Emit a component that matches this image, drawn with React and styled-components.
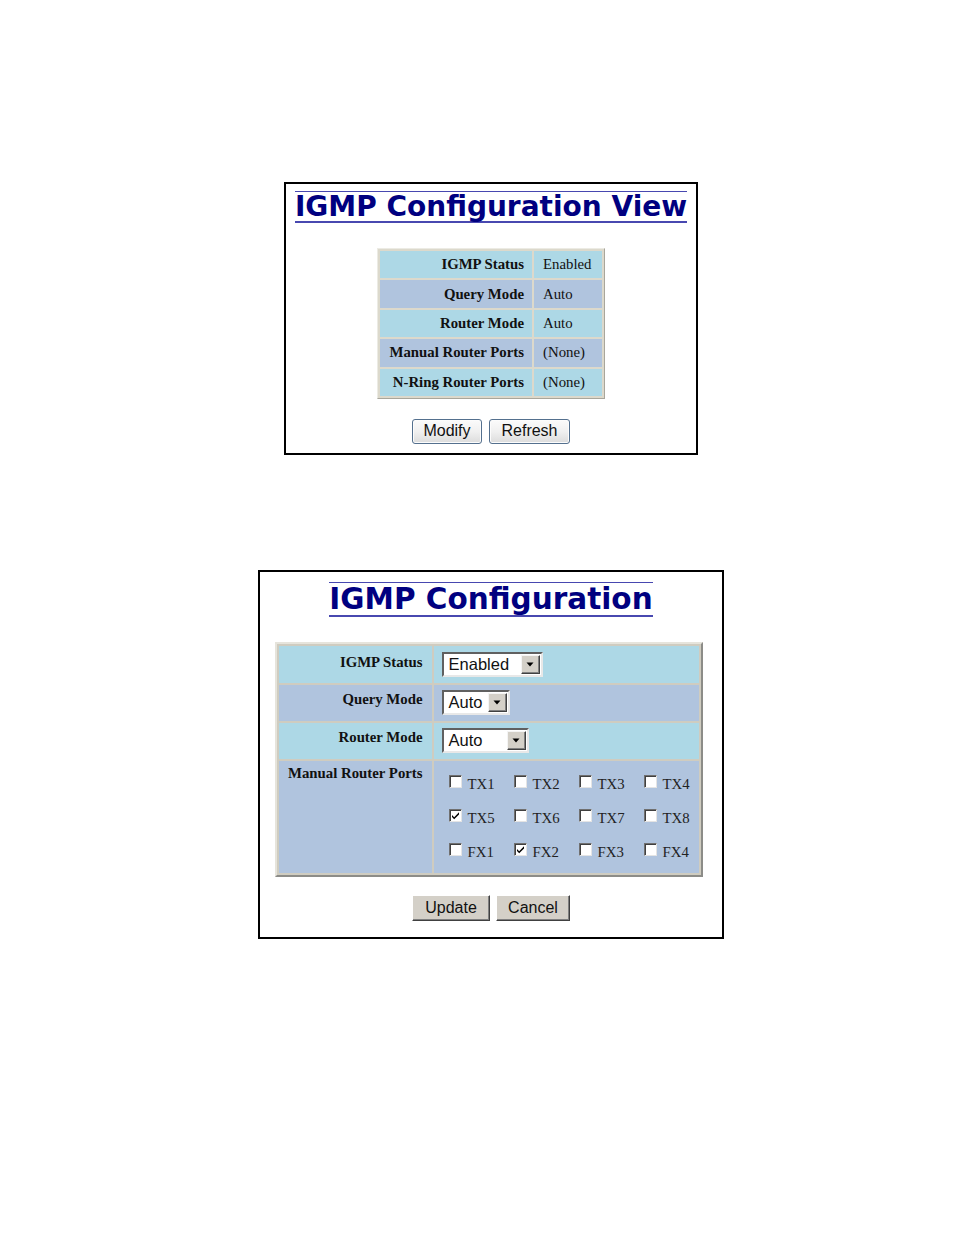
import React from "react";
import styled, { createGlobalStyle } from "styled-components";

const GlobalStyle = createGlobalStyle`
	html, body {
		margin: 0;
		padding: 0;
		background: #ffffff;
	}
	body {
		font-family: "Liberation Serif", "Times New Roman", serif;
		width: 954px;
		height: 1235px;
	}
`;

const Page = styled.div`
	display: flex;
	flex-direction: column;
	align-items: center;
	padding: 182px 0 0 28px;
	gap: 115px;
`;

const Panel = styled.div`
	width: ${(p) => p.width}px;
	box-sizing: border-box;
	border: 2px solid #000;
	display: flex;
	flex-direction: column;
	align-items: center;
	padding: ${(p) => p.pad};
`;

const Title = styled.h1`
	margin: 0;
	font-family: "DejaVu Sans", Verdana, sans-serif;
	font-weight: bold;
	font-size: ${(p) => p.size}px;
	line-height: ${(p) => p.lh}px;
	color: #000080;
	border-top: 1px solid #4848b0;
	border-bottom: 2px solid #4848b0;
	white-space: nowrap;
`;

const ViewTable = styled.table`
	border-collapse: separate;
	border-spacing: 2px;
	background: #dcd9cc;
	border-top: 1px solid #ecebe4;
	border-left: 1px solid #ecebe4;
	border-right: 1px solid #a8a69c;
	border-bottom: 1px solid #a8a69c;
	margin-top: ${(p) => p.top}px;
	font-size: 14.8px;
`;

const Row = styled.tr`
	background: ${(p) => (p.alt ? "#b0c4de" : "#add8e6")};
`;

const Label = styled.td`
	font-weight: bold;
	text-align: right;
	color: #111;
	padding: ${(p) => p.pad || "0 8px 0 9px"};
	height: ${(p) => p.h || 27.4}px;
	width: ${(p) => (p.w ? `${p.w}px` : "auto")};
	vertical-align: ${(p) => p.valign || "middle"};
	white-space: nowrap;
`;

const Value = styled.td`
	color: #111;
	padding: ${(p) => p.pad || "0 10px 0 9px"};
	height: ${(p) => p.h || 27.4}px;
	vertical-align: ${(p) => p.valign || "middle"};
	white-space: nowrap;
`;

const ButtonRow = styled.div`
	display: flex;
	gap: ${(p) => p.gap}px;
	margin-top: ${(p) => p.top}px;
`;

const VistaButton = styled.button`
	font-family: "Liberation Sans", Arial, sans-serif;
	font-size: 16px;
	color: #111;
	height: 25px;
	width: ${(p) => p.w}px;
	padding: 0;
	border: 1px solid #54708e;
	border-radius: 3px;
	background: linear-gradient(#fbfbfb, #f0f0f0 50%, #dcdcdc);
	box-shadow: inset 0 0 0 1px #fcfcfc;
`;

const ClassicButton = styled.button`
	font-family: "Liberation Sans", Arial, sans-serif;
	font-size: 16px;
	color: #111;
	height: 26px;
	width: ${(p) => p.w}px;
	padding: 0;
	background: #d4d0c8;
	border: none;
	border-top: 1px solid #ffffff;
	border-left: 1px solid #ffffff;
	border-right: 1px solid #404040;
	border-bottom: 1px solid #404040;
	box-shadow: inset -1px -1px 0 #808080;
`;

const ConfigTable = styled.table`
	border-collapse: separate;
	border-spacing: 2px;
	background: #cfccc0;
	border-top: 2px solid #e6e4dc;
	border-left: 2px solid #e6e4dc;
	border-right: 2px solid #8c8c88;
	border-bottom: 2px solid #8c8c88;
	margin: 25px 4px 0 0;
	width: 428px;
	font-size: 14.8px;
`;

const Select = styled.div`
	display: inline-flex;
	align-items: center;
	justify-content: space-between;
	box-sizing: border-box;
	width: ${(p) => p.w}px;
	height: 25px;
	background: #fff;
	border-top: 2px solid #606060;
	border-left: 2px solid #606060;
	border-right: 2px solid #e8e8e8;
	border-bottom: 2px solid #e8e8e8;
	font-family: "Liberation Sans", Arial, sans-serif;
	font-size: 16.5px;
	color: #111;
	padding: 0 1px 0 5px;
`;

const Arrow = styled.span`
	width: 19px;
	height: 19px;
	box-sizing: border-box;
	background: #d4d0c8;
	border-top: 1px solid #f4f4f4;
	border-left: 1px solid #f4f4f4;
	border-right: 1px solid #404040;
	border-bottom: 1px solid #404040;
	box-shadow: inset -1px -1px 0 #808080;
	display: flex;
	align-items: center;
	justify-content: center;
`;

const PortGrid = styled.div`
	display: grid;
	grid-template-columns: repeat(3, 65px) auto;
	row-gap: 13px;
	padding: 13px 0 0 15px;
`;

const Port = styled.label`
	display: flex;
	align-items: center;
	gap: 6px;
	height: 21px;
	color: #222;
`;

const Box = styled.span`
	width: 13px;
	height: 13px;
	box-sizing: border-box;
	background: #fff;
	border-top: 1px solid #707070;
	border-left: 1px solid #707070;
	border-right: 1px solid #e4e4e4;
	border-bottom: 1px solid #e4e4e4;
	box-shadow: inset 1px 1px 0 #404040;
	display: flex;
	align-items: center;
	justify-content: center;
	margin-top: -5px;
`;

const ArrowIcon = () => (
	<Arrow>
		<svg width="8" height="5" viewBox="0 0 8 5">
			<path d="M0.5 0.5h7L4 4.5z" fill="#000" />
		</svg>
	</Arrow>
);

const CheckBox = ({ checked }) => (
	<Box>
		{checked && (
			<svg width="9" height="9" viewBox="0 0 9 9">
				<path d="M1 4l2.2 2.2L8 1.2v2.3L3.2 8.3 1 6.1z" fill="#000" />
			</svg>
		)}
	</Box>
);

const viewRows = [
	["IGMP Status", "Enabled"],
	["Query Mode", "Auto"],
	["Router Mode", "Auto"],
	["Manual Router Ports", "(None)"],
	["N-Ring Router Ports", "(None)"],
];

const ports = [
	["TX1", false], ["TX2", false], ["TX3", false], ["TX4", false],
	["TX5", true], ["TX6", false], ["TX7", false], ["TX8", false],
	["FX1", false], ["FX2", true], ["FX3", false], ["FX4", false],
];

const App = () => {
	return (
		<>
			<GlobalStyle />
			<Page>
				<Panel width={414} pad="7px 0 9px">
					<Title size={28} lh={29}>IGMP Configuration View</Title>
					<ViewTable top={25}>
						<tbody>
							{viewRows.map(([label, value], i) => (
								<Row key={label} alt={i % 2 === 1}>
									<Label>{label}</Label>
									<Value>{value}</Value>
								</Row>
							))}
						</tbody>
					</ViewTable>
					<ButtonRow gap={7} top={20}>
						<VistaButton w={70}>Modify</VistaButton>
						<VistaButton w={81}>Refresh</VistaButton>
					</ButtonRow>
				</Panel>

				<Panel width={466} pad="10px 0 16px">
					<Title size={29.5} lh={32}>IGMP Configuration</Title>
					<ConfigTable>
						<tbody>
							<Row>
								<Label w={132} h={29} valign="top" pad="8px 9px 0 9px">IGMP Status</Label>
								<Value h={31} pad="6px 0 0 8px" valign="top">
									<Select w={101}>Enabled<ArrowIcon /></Select>
								</Value>
							</Row>
							<Row alt>
								<Label h={30} valign="top" pad="6px 9px 0 9px">Query Mode</Label>
								<Value h={31} pad="5px 0 0 8px" valign="top">
									<Select w={68}>Auto<ArrowIcon /></Select>
								</Value>
							</Row>
							<Row>
								<Label h={30} valign="top" pad="6px 9px 0 9px">Router Mode</Label>
								<Value h={31} pad="5px 0 0 8px" valign="top">
									<Select w={87}>Auto<ArrowIcon /></Select>
								</Value>
							</Row>
							<Row alt>
								<Label h={108} valign="top" pad="4px 9px 0 9px">Manual Router Ports</Label>
								<Value h={112} pad="0" valign="top">
									<PortGrid>
										{ports.map(([name, checked]) => (
											<Port key={name}>
												<CheckBox checked={checked} />
												{name}
											</Port>
										))}
									</PortGrid>
								</Value>
							</Row>
						</tbody>
					</ConfigTable>
					<ButtonRow gap={6} top={18}>
						<ClassicButton w={78}>Update</ClassicButton>
						<ClassicButton w={74}>Cancel</ClassicButton>
					</ButtonRow>
				</Panel>
			</Page>
		</>
	);
};

export default App;
